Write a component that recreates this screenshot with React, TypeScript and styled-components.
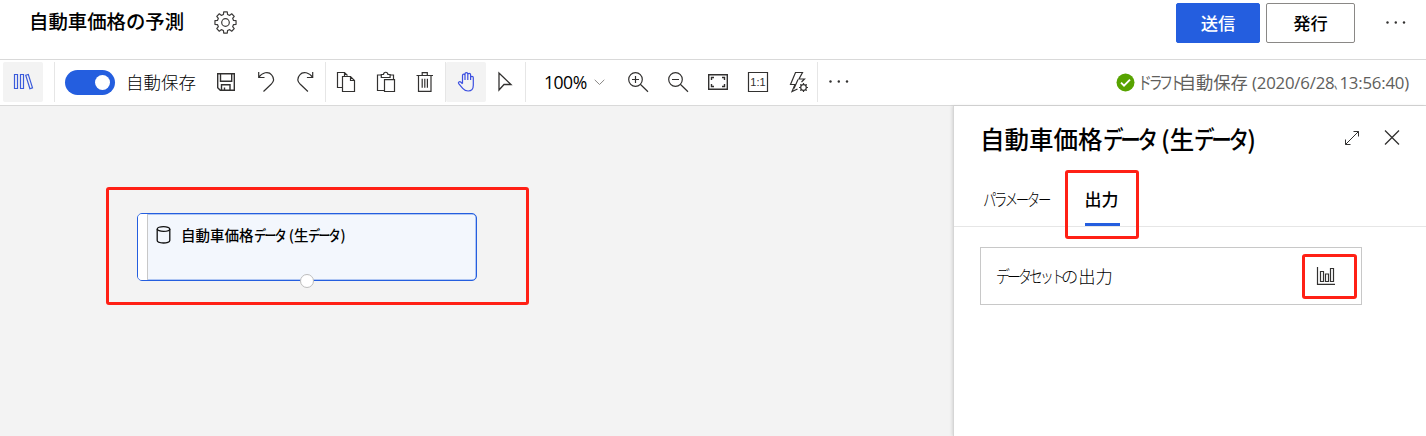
import React from "react";
import styled, { createGlobalStyle, css } from "styled-components";

const GlobalStyle = createGlobalStyle`
  *, *::before, *::after { box-sizing: border-box; }
  body {
    margin: 0;
    background: #fff;
    color: #000;
    font-family: "Open Sans", "Noto Sans CJK JP", sans-serif;
    overflow: hidden;
  }
  button { font: inherit; color: inherit; padding: 0; margin: 0; background: none; border: 0; }
  svg { display: block; flex: none; }
`;

const Page = styled.div`
  display: flex;
  flex-direction: column;
  width: 1426px;
  height: 436px;
  overflow: hidden;
`;

const Header = styled.header`
  display: flex;
  align-items: flex-start;
  height: 60px;
  padding: 3px 10px 0 29px;
  border-bottom: 1px solid #d9d9d9;
`;

const Heading = styled.h1`
  margin: 0;
  width: 185px;
  font: 500 19.4px/36px "Noto Sans CJK JP", sans-serif;
  white-space: nowrap;
`;

const HeaderActions = styled.div`
  display: flex;
  gap: 6px;
  margin-left: auto;
`;

const ActionButton = styled.button<{ $primary?: boolean }>`
  height: 40px;
  width: ${(p) => (p.$primary ? 84 : 89)}px;
  border-radius: 2px;
  border: 1px solid ${(p) => (p.$primary ? "#245edf" : "#8a8886")};
  background: ${(p) => (p.$primary ? "#245edf" : "#fff")};
  color: ${(p) => (p.$primary ? "#fff" : "#000")};
  font: 500 17.3px/38px "Noto Sans CJK JP", sans-serif;
`;

const MoreButton = styled.button<{ $header?: boolean }>`
  width: 40px;
  height: 40px;
  margin-left: ${(p) => (p.$header ? 14 : 0)}px;
  margin-right: ${(p) => (p.$header ? 1 : 0)}px;
`;

const Toolbar = styled.div`
  display: flex;
  align-items: center;
  height: 46px;
  padding: 2px 17px 3px 3px;
  border-bottom: 1px solid #d9d9d9;
`;

const ToolButton = styled.button<{ $active?: boolean }>`
  width: 40px;
  height: 40px;
  flex: 0 0 40px;
  border-radius: 2px;
  overflow: hidden;
  background: ${(p) => (p.$active ? "#f3f3f3" : "transparent")};
  &:last-child:not(:first-child) {
    flex-basis: 39px;
  }
`;

const ToolGroup = styled.div<{ $width: number }>`
  display: flex;
  width: ${(p) => p.$width}px;
  height: 40px;
  flex: none;
  border-right: 1px solid #e6e6e6;
`;

const AutoSave = styled.label`
  display: flex;
  align-items: center;
  gap: 11px;
  width: 151px;
  padding-left: 10px;
  font: 300 17.5px/40px "Noto Sans CJK JP", sans-serif;
  white-space: nowrap;
`;

const Switch = styled.span`
  display: flex;
  align-items: center;
  justify-content: flex-end;
  width: 50px;
  height: 25px;
  padding-right: 5px;
  border-radius: 13px;
  background: #245edf;
  &::after {
    content: "";
    width: 15px;
    height: 15px;
    border-radius: 50%;
    background: #fff;
  }
`;

const ZoomLevel = styled.div`
  display: flex;
  align-items: center;
  gap: 7px;
  width: 92px;
  padding-left: 18px;
  font-size: 17.6px;
  letter-spacing: -0.5px;
  line-height: 41px;
`;

const Status = styled.div`
  display: flex;
  align-items: center;
  gap: 3px;
  margin-left: auto;
  color: #605e5c;
  font-size: 17.3px;
  line-height: 40px;
  white-space: nowrap;
`;

const Timestamp = styled.span`
  font-size: 16.8px;
  letter-spacing: -0.2px;
`;

const Kana = styled.span<{ $w: number; $scale?: number; $track?: number }>`
  display: inline-block;
  width: ${(p) => p.$w}px;
  font-family: "Noto Sans CJK JP", sans-serif;
  letter-spacing: ${(p) => p.$track ?? 0}px;
  white-space: nowrap;
  transform: scaleX(${(p) => p.$scale ?? 1});
  transform-origin: left center;
`;

const Workspace = styled.main`
  display: flex;
  flex: 1;
  min-height: 0;
`;

const Canvas = styled.section`
  position: relative;
  flex: 1;
  background: #f3f3f3;
`;

const highlight = css`
  border: 3px solid #ff2015;
  border-radius: 3px;
`;

const NodeHighlight = styled.div`
  ${highlight}
  position: absolute;
  left: 106px;
  top: 81px;
  width: 423px;
  height: 118px;
`;

const Node = styled.div`
  position: absolute;
  left: 137px;
  top: 107px;
  display: flex;
  width: 340px;
  height: 68px;
  border: 1px solid #245edf;
  border-radius: 5px;
  background: #f3f7fd;
  box-shadow: inset 0 0 0 0.5px #6d95ea;
`;

const NodeStrip = styled.div`
  width: 10px;
  border-right: 1px solid #c8c8c8;
  border-radius: 4px 0 0 4px;
  background: #fff;
`;

const NodeLabel = styled.div`
  display: flex;
  gap: 10px;
  padding: 11px 0 0 7px;
  font: 500 14.5px/20px "Noto Sans CJK JP", sans-serif;
  white-space: nowrap;
`;

const Port = styled.span`
  position: absolute;
  left: 162px;
  bottom: -8px;
  width: 14px;
  height: 14px;
  border: 1px solid #bdbdbd;
  border-radius: 50%;
  background: #fff;
`;

const Panel = styled.aside`
  position: relative;
  width: 473px;
  border-left: 1px solid #d6d6d6;
  background: #fff;
  box-shadow: -1px 0 3px rgba(0, 0, 0, 0.12);
`;

const PanelHeader = styled.div`
  display: flex;
  align-items: center;
  height: 64px;
  padding: 0 14px 0 26px;
`;

const PanelTitle = styled.h2`
  flex: 1;
  margin: 0;
  padding-top: 2px;
  font: 500 24.5px/36px "Noto Sans CJK JP", sans-serif;
  white-space: nowrap;
`;

const PanelButton = styled.button`
  width: 40px;
  height: 40px;
`;

const TabList = styled.div`
  display: flex;
  height: 57px;
  padding-left: 29px;
  border-bottom: 1px solid #e6e6e6;
`;

const Tab = styled.div<{ $selected?: boolean }>`
  ${(p) => p.$selected && highlight}
  display: flex;
  justify-content: ${(p) => (p.$selected ? "center" : "flex-start")};
  width: ${(p) => (p.$selected ? 74 : 82)}px;
  height: ${(p) => (p.$selected ? 69 : 56)}px;
  flex: none;
  padding-top: ${(p) => (p.$selected ? 0 : 3)}px;
  font: ${(p) => (p.$selected ? 500 : 300)} 17px/51px "Noto Sans CJK JP", sans-serif;
  white-space: nowrap;
`;

const TabText = styled.span`
  width: 35px;
  height: 53px;
  border-bottom: 3px solid #245edf;
`;

const OutputRow = styled.div`
  display: flex;
  align-items: center;
  justify-content: space-between;
  width: 382px;
  height: 58px;
  margin: 20px 0 0 26px;
  padding: 0 4px 0 15px;
  border: 1px solid #c8c8c8;
  font: 300 17.3px/56px "Noto Sans CJK JP", sans-serif;
`;

const ChartButton = styled.button`
  ${highlight}
  width: 55px;
  height: 45px;
`;

type IconProps = { children: React.ReactNode; color?: string; width?: number };
const Icon = ({ children, color = "#323130", width = 1.2 }: IconProps) => (
  <svg width="40" height="40" viewBox="0 0 40 40" fill="none" stroke={color} strokeWidth={width}>
    {children}
  </svg>
);

const Dots = () => (
  <Icon>
    <g fill="#323130" stroke="none">
      <circle cx="12.500" cy="19.500" r="1.200" />
      <circle cx="20.800" cy="19.500" r="1.200" />
      <circle cx="29" cy="19.500" r="1.200" />
    </g>
  </Icon>
);

const gearPath = (() => {
  const pts: string[] = [];
  for (let i = 0; i < 8; i++) {
    const base = (i * Math.PI) / 4 - Math.PI / 2;
    ([[-0.25, 8.3], [-0.17, 10.7], [0.17, 10.7], [0.25, 8.3]] as const).forEach(([a, r]) => {
      pts.push(`${(11.5 + r * Math.cos(base + a)).toFixed(2)} ${(11.5 + r * Math.sin(base + a)).toFixed(2)}`);
    });
  }
  return `M${pts.join("L")}Z`;
})();

const GearIcon = styled.svg`
  margin-top: 8px;
`;

export default function App() {
  return (
    <Page>
      <GlobalStyle />
      <Header>
        <Heading>自動車価格の予測</Heading>
        <GearIcon width="23" height="23" viewBox="0 0 23 23" fill="none" stroke="#3b3a39" strokeWidth="1.2" strokeLinejoin="round">
          <path d={gearPath} />
          <circle cx="11.5" cy="11.5" r="3.8" />
        </GearIcon>
        <HeaderActions>
          <ActionButton $primary>送信</ActionButton>
          <ActionButton>発行</ActionButton>
          <MoreButton $header><Dots /></MoreButton>
        </HeaderActions>
      </Header>

      <Toolbar>
        <ToolGroup $width={52}>
          <ToolButton $active>
            <Icon color="#3b5bdb">
              <path d="M11.5 12.5h3v14h-3zM17.5 12.5h3v14h-3zM22.7 13.2l2.600-.8 4.200 13.500-2.600.8z" />
            </Icon>
          </ToolButton>
        </ToolGroup>
        <AutoSave><Switch />自動保存</AutoSave>
        <ToolGroup $width={120}>
          <ToolButton>
            <Icon width={1.4}>
              <path d="M11.700 11.700h16.600v16.600h-14l-2.600-2.600zM14.500 12v7.300h11.200V12M15.500 28v-5.200h8.500V28M18.500 28v-2.500" />
            </Icon>
          </ToolButton>
          <ToolButton>
            <Icon>
              <path d="M12.700 10v5.500h5.800M12.900 15.300c3-4.800 9.500-6.500 12.700-2.500 3 3.500 2 7-.5 9.500L17.500 29.500" />
            </Icon>
          </ToolButton>
          <ToolButton>
            <Icon>
              <path d="M26.700 10v5.500h-5.800M26.500 15.300c-3-4.800-9.500-6.500-12.700-2.500-3 3.500-2 7 .5 9.500l7.600 7.200" />
            </Icon>
          </ToolButton>
        </ToolGroup>
        <ToolGroup $width={120}>
          <ToolButton>
            <Icon>
              <path d="M16 25.500h-4.500v-15h7l3 3M16.500 14.500h8l4 4v11h-12zM24.500 14.500v4h4M18.500 10.500v3.500" />
            </Icon>
          </ToolButton>
          <ToolButton>
            <Icon>
              <path d="M18 28.500h-6.500v-15.500h3.500M24 13h3.500v4.500M15.300 15.500v-3h2.200c.2-3 4.200-3 4.400 0h2.200v3zM18.500 17.700h10v11.800h-10z" />
            </Icon>
          </ToolButton>
          <ToolButton>
            <Icon>
              <path d="M10.500 13.500h16.500M16.200 13.300v-2.600h5.100v2.600M12.500 13.500v15.800h12.500V13.500M16.200 16.800v9M18.800 16.800v9M21.400 16.800v9" />
            </Icon>
          </ToolButton>
        </ToolGroup>
        <ToolGroup $width={80}>
          <ToolButton $active>
            <Icon color="#3b4fe0">
              <path d="M16.500 21.500v-8c0-1.800 2.500-1.800 2.500 0V18M19 18v-6c0-1.900 2.800-1.900 2.800 0v6M21.800 18v-5.300c0-1.900 2.800-1.900 2.800 0V18M24.600 18v-2.200c0-1.800 2.700-1.800 2.700 0v7.400c0 3.800-2.100 5.800-5.200 5.800-2.600 0-4-.9-5.400-2.600l-4-4.800c-1-1.400.9-2.600 2-1.600l1.800 1.900" />
            </Icon>
          </ToolButton>
          <ToolButton>
            <Icon width={1.3}>
              <path d="M13 11v17l5-5.500h7z" />
            </Icon>
          </ToolButton>
        </ToolGroup>
        <ZoomLevel>
          100%
          <svg width="11" height="7" viewBox="0 0 11 7" fill="none" stroke="#8a8886"><path d="M.7.8l4.800 4.700L10.300.8" /></svg>
        </ZoomLevel>
        <ToolGroup $width={200}>
          <ToolButton>
            <Icon><circle cx="17.500" cy="17.500" r="6.800" /><path d="M22.300 22.300l7.700 7.400M14 17.500h7M17.500 14v7" /></Icon>
          </ToolButton>
          <ToolButton>
            <Icon><circle cx="17.500" cy="17.500" r="6.800" /><path d="M22.300 22.300l7.700 7.400M14 17.500h7" /></Icon>
          </ToolButton>
          <ToolButton>
            <Icon width={1.4}>
              <path d="M10.700 12.700h18.600v14.600H10.700zM13.500 18v-2.500H16M24 15.500h2.500V18M26.500 22v2.500H24M16 24.500h-2.500V22" />
            </Icon>
          </ToolButton>
          <ToolButton>
            <Icon>
              <path d="M10.500 10.500h19v19h-19z" />
              <text x="20" y="23.500" textAnchor="middle" fontFamily="Liberation Sans" fontSize="11" fill="#323130" stroke="none">1:1</text>
            </Icon>
          </ToolButton>
          <ToolButton>
            <Icon>
              <path d="M19.500 27l-5.500 2.500 3-7h-4.500l5-12h7l-3.500 6.500h5.500l-3 3M20 17.500l-4 9" />
              <circle cx="25.500" cy="25.500" r="2.800" />
              <path d="M25.500 21v1.700M25.500 28.300V30M21 25.500h1.700M28.300 25.500H30M22.300 22.300l1.200 1.200M27.500 27.500l1.200 1.200M28.700 22.300l-1.200 1.200M23.500 27.500l-1.200 1.200" />
            </Icon>
          </ToolButton>
        </ToolGroup>
        <MoreButton><Dots /></MoreButton>
        <Status>
          <svg width="19" height="19" viewBox="0 0 19 19">
            <circle cx="9.500" cy="9.500" r="9" fill="#57a300" />
            <path d="M5 9.700l3 3 6-6" fill="none" stroke="#fff" strokeWidth="1.900" />
          </svg>
          <span>
            <Kana $w={41} $scale={0.8} $track={-4}>ドラフト</Kana>自動保存
            <Timestamp> (2020/6/28<Kana $w={5} $scale={0.5}>、</Kana>13:56:40)</Timestamp>
          </span>
        </Status>
      </Toolbar>

      <Workspace>
        <Canvas>
          <NodeHighlight />
          <Node>
            <NodeStrip />
            <NodeLabel>
              <svg width="16" height="20" viewBox="0 0 16 20" fill="none" stroke="#111" strokeWidth="1.300">
                <ellipse cx="8.500" cy="4" rx="6.300" ry="2.400" />
                <path d="M2.200 4v11.600c0 3.200 12.600 3.200 12.600 0V4" />
              </svg>
              <span>自動車価格<Kana $w={32} $scale={0.84} $track={-2.300}>データ</Kana> (生<Kana $w={32} $scale={0.84} $track={-2.300}>データ</Kana>)</span>
            </NodeLabel>
            <Port />
          </Node>
        </Canvas>

        <Panel>
          <PanelHeader>
            <PanelTitle>自動車価格<Kana $w={53} $scale={0.84} $track={-4}>データ</Kana> (生<Kana $w={53} $scale={0.84} $track={-4}>データ</Kana>)</PanelTitle>
            <PanelButton>
              <Icon width={1}><path d="M13.500 26.500l13-13M21.500 13.500h5v5M13.500 21.500v5h5" /></Icon>
            </PanelButton>
            <PanelButton>
              <Icon width={1.3}><path d="M13 12.500l14 14M27 12.500l-14 14" /></Icon>
            </PanelButton>
          </PanelHeader>
          <TabList>
            <Tab><Kana $w={66} $scale={0.79} $track={-3}>パラメーター</Kana></Tab>
            <Tab $selected><TabText>出力</TabText></Tab>
          </TabList>
          <OutputRow>
            <span><Kana $w={65} $scale={0.8} $track={-3.5}>データセット</Kana>の出力</span>
            <ChartButton>
              <svg width="49" height="39" viewBox="0 0 49 39" fill="none" stroke="#323130" strokeWidth="1.200">
                <path d="M12.500 10v17.300h17.500M15.500 14.500h3v10h-3zM20.500 17h3v7.500h-3zM25.500 11.500h3v13h-3z" />
              </svg>
            </ChartButton>
          </OutputRow>
        </Panel>
      </Workspace>
    </Page>
  );
}
